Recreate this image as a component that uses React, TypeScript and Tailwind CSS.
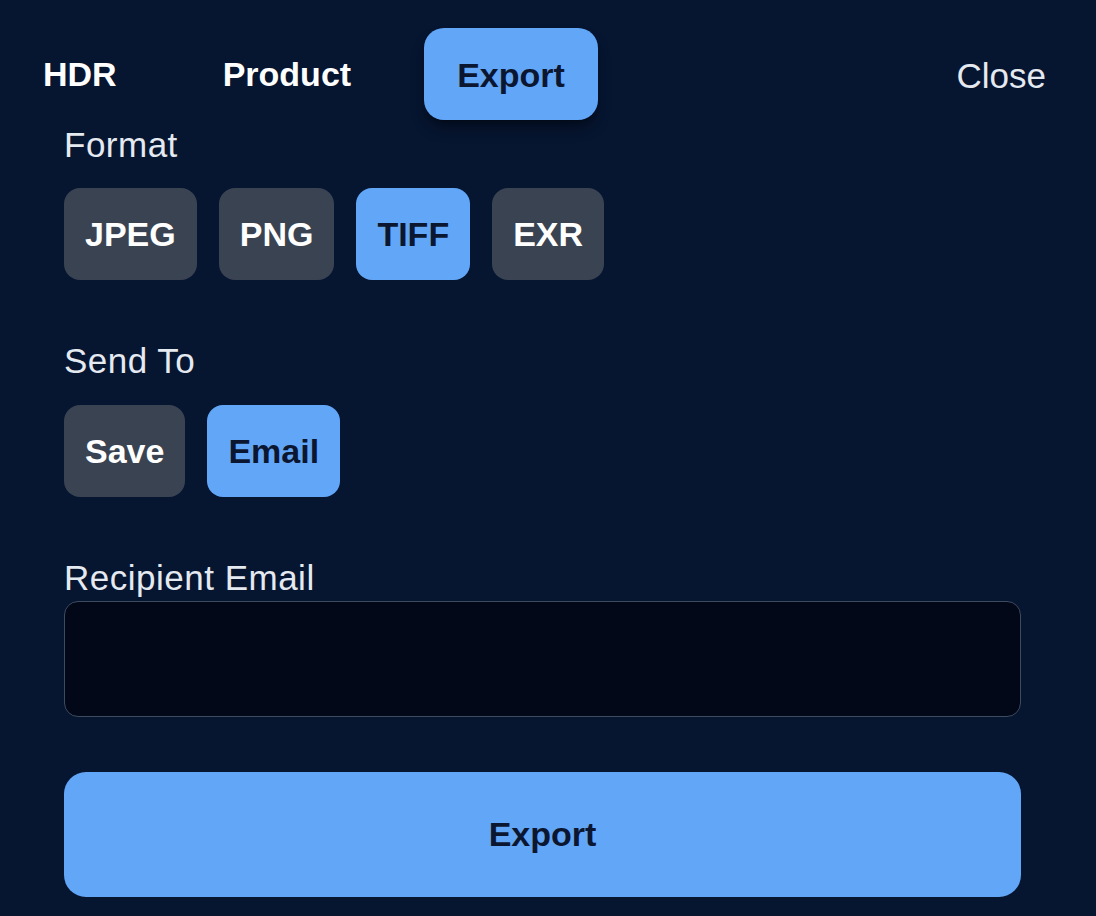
import { useState } from "react";

const tabs = ["HDR", "Product", "Export"];
const formats = ["JPEG", "PNG", "TIFF", "EXR"];
const targets = ["Save", "Email"];

export default function App() {
  const [tab, setTab] = useState("Export");
  const [format, setFormat] = useState("TIFF");
  const [target, setTarget] = useState("Email");

  return (
    <div
      className="min-h-[916px] w-full bg-[#061530] text-[#e5e9f0]"
      style={{ fontFamily: '"Liberation Sans", Arial, sans-serif' }}
    >
      <div className="flex items-center justify-between pl-[10px] pr-[50px] pt-[28px]">
        <div className="flex gap-[40px]">
          {tabs.map((t) => (
            <button
              key={t}
              onClick={() => setTab(t)}
              className={
                tab === t
                  ? "h-[92px] rounded-[20px] bg-[#62a6f8] px-[33px] pt-[2px] text-[34px] font-bold text-[#0b1630] shadow-lg shadow-black/40"
                  : "h-[92px] rounded-[20px] px-[33px] text-[34px] font-bold text-white"
              }
            >
              {t}
            </button>
          ))}
        </div>
        <button className="pt-[4px] text-[35px] text-[#e5e9f0]">Close</button>
      </div>

      <div className="flex flex-col px-[64px] pr-[75px]">
        <div className="mt-[5px] text-[35px] leading-[40px] tracking-[0.5px]">Format</div>
        <div className="mt-[23px] flex gap-[22px]">
          {formats.map((f) => (
            <button
              key={f}
              onClick={() => setFormat(f)}
              className={
                format === f
                  ? "h-[92px] rounded-[16px] bg-[#62a6f8] px-[21px] text-[34px] font-bold text-[#0b1630]"
                  : "h-[92px] rounded-[16px] bg-[#3a4352] px-[21px] text-[34px] font-bold text-white"
              }
            >
              {f}
            </button>
          ))}
        </div>

        <div className="mt-[61px] text-[35px] leading-[40px] tracking-[0.5px]">Send To</div>
        <div className="mt-[24px] flex gap-[22px]">
          {targets.map((s) => (
            <button
              key={s}
              onClick={() => setTarget(s)}
              className={
                target === s
                  ? "h-[92px] rounded-[16px] bg-[#62a6f8] px-[21px] text-[34px] font-bold text-[#0b1630]"
                  : "h-[92px] rounded-[16px] bg-[#3a4352] px-[21px] text-[34px] font-bold text-white"
              }
            >
              {s}
            </button>
          ))}
        </div>

        <div className="mt-[61px] text-[35px] leading-[40px] tracking-[0.5px]">Recipient Email</div>
        <input
          type="email"
          className="mt-[3px] h-[116px] w-full rounded-[14px] border border-[#3d4b5e] bg-[#020818] px-5 text-[28px] text-white outline-none"
        />

        <button className="mt-[55px] h-[125px] w-full rounded-[22px] bg-[#62a6f8] text-[34px] font-bold text-[#0b1630]">
          Export
        </button>
      </div>
    </div>
  );
}
